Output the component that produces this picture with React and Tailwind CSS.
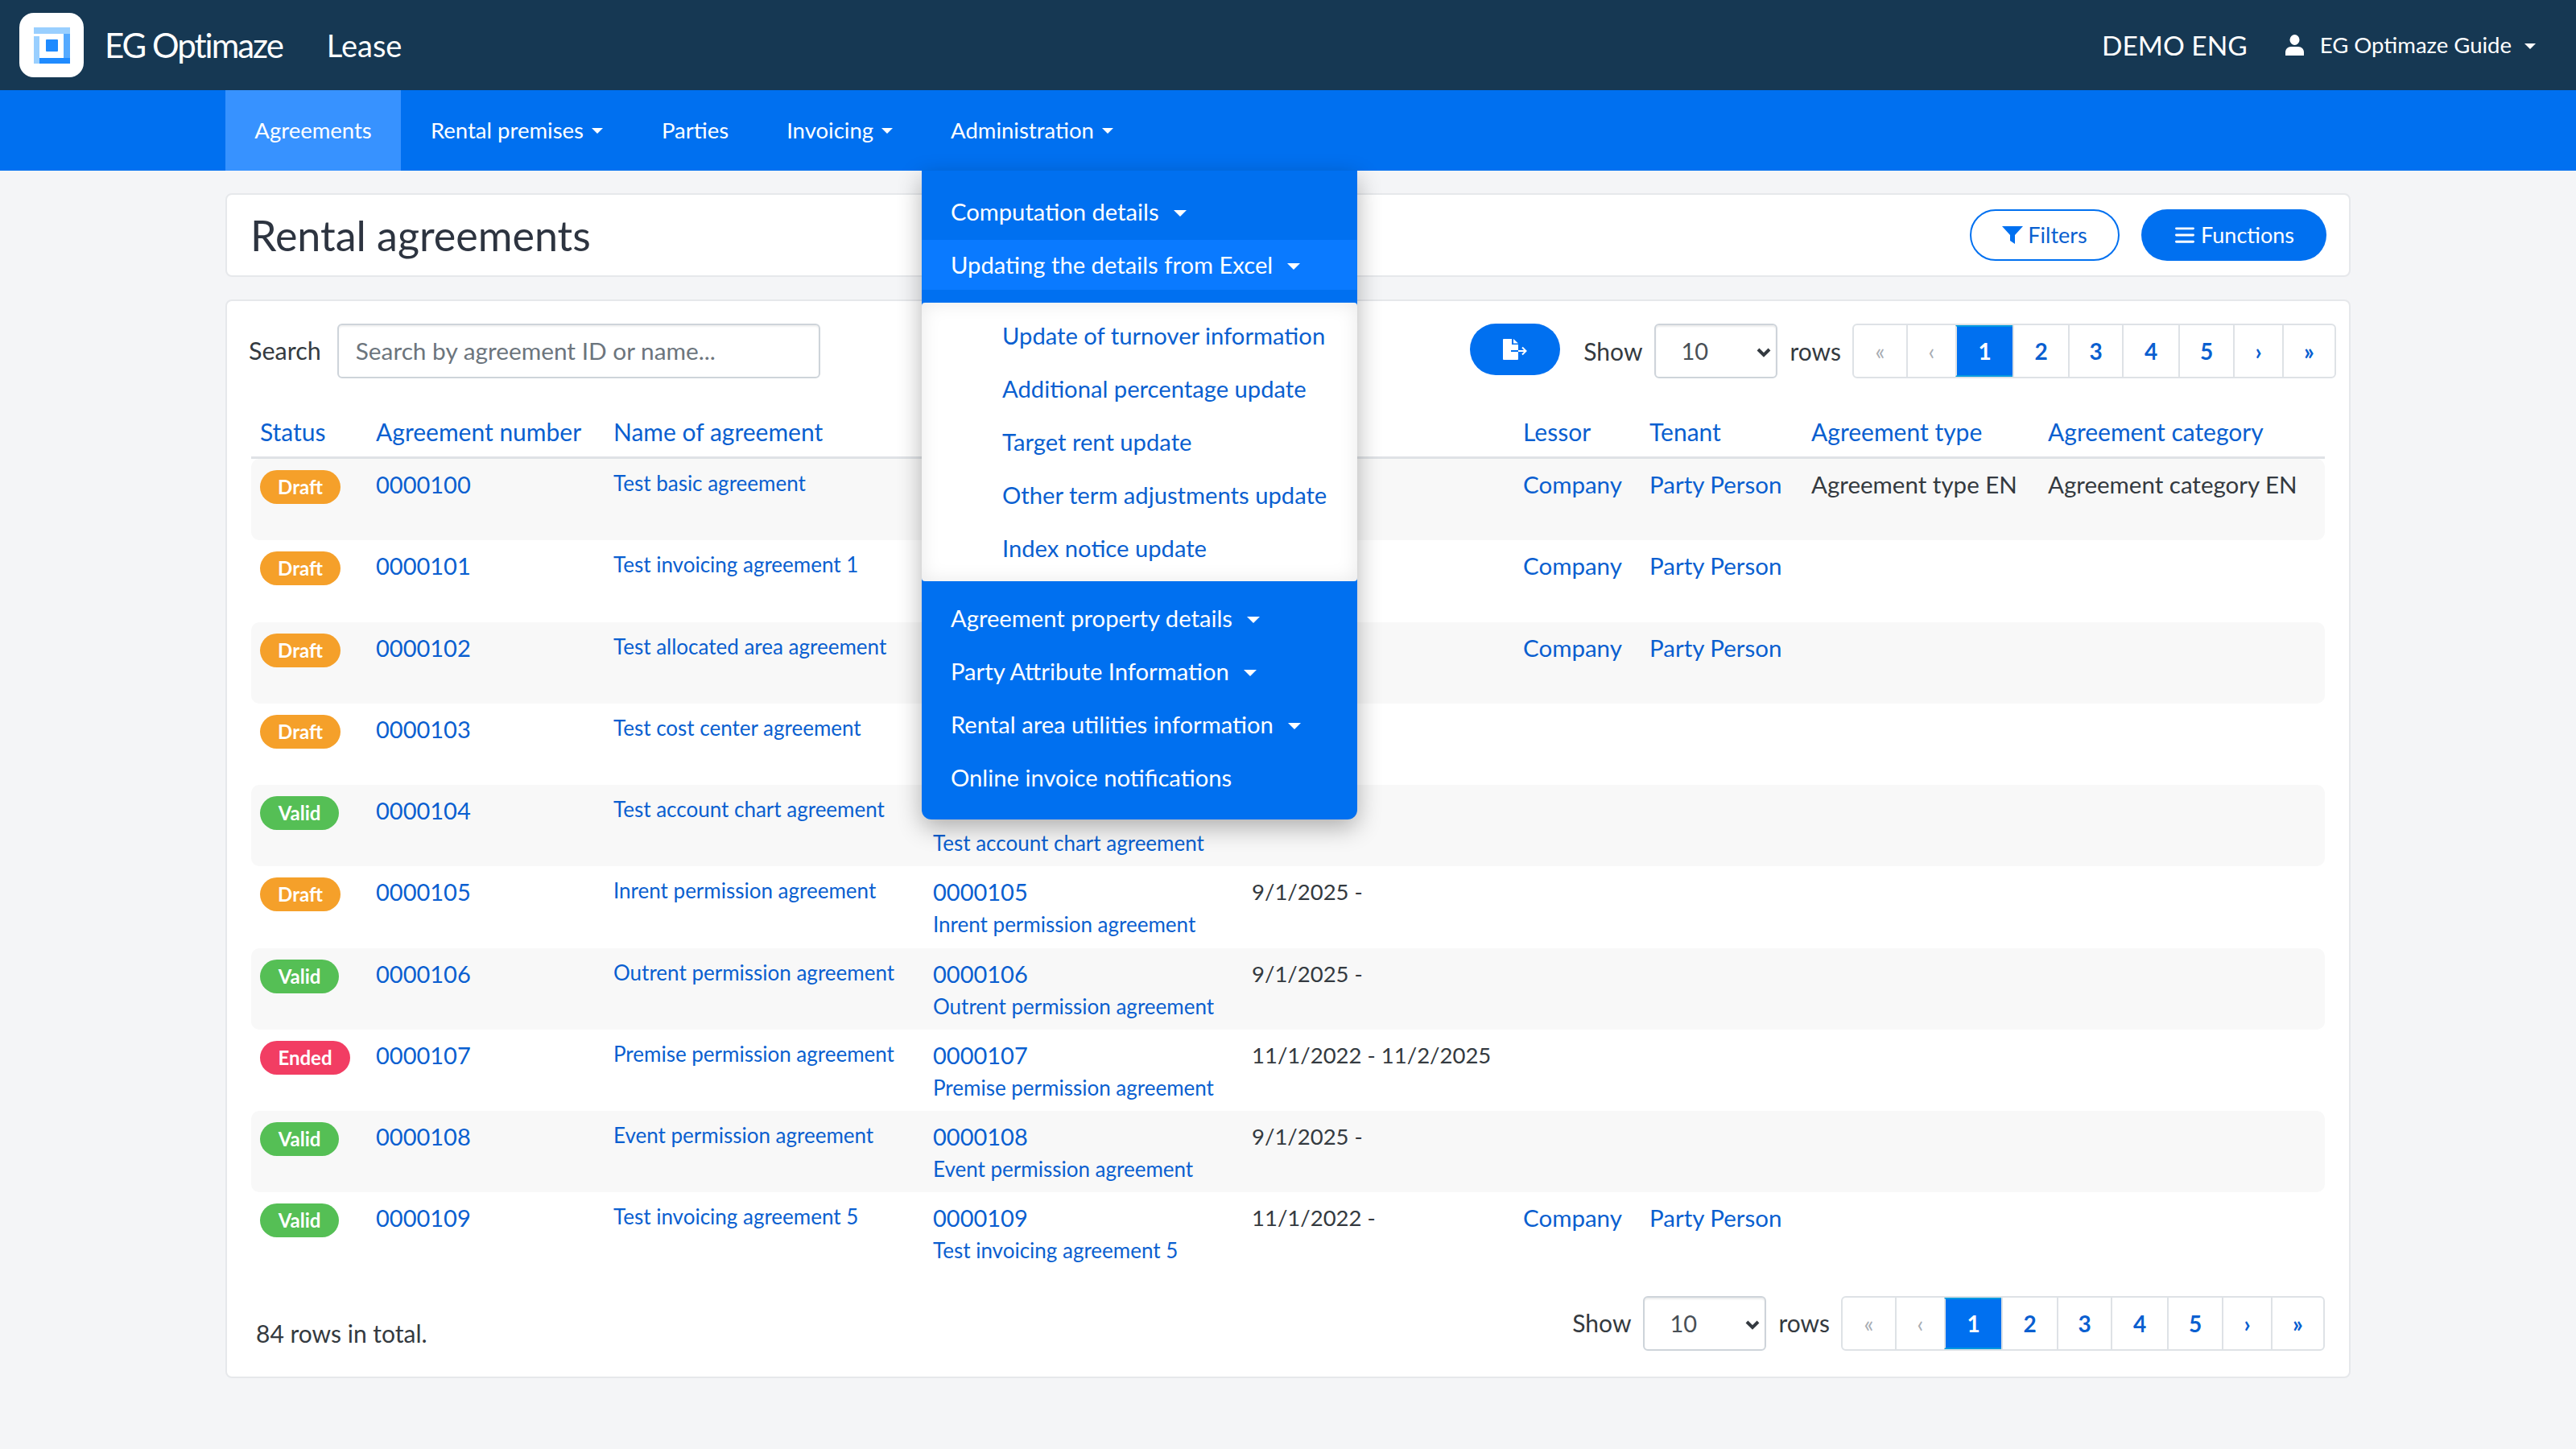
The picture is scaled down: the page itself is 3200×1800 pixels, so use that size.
import React from 'react';
import { AlignJustify } from 'lucide-react';

const rows = [
  { status: 'Draft', no: '0000100', name: 'Test basic agreement', date: '', lessor: true, tenant: true, type: 'Agreement type EN', cat: 'Agreement category EN' },
  { status: 'Draft', no: '0000101', name: 'Test invoicing agreement 1', date: '', lessor: true, tenant: true },
  { status: 'Draft', no: '0000102', name: 'Test allocated area agreement', date: '', lessor: true, tenant: true },
  { status: 'Draft', no: '0000103', name: 'Test cost center agreement', date: '' },
  { status: 'Valid', no: '0000104', name: 'Test account chart agreement', date: '' },
  { status: 'Draft', no: '0000105', name: 'Inrent permission agreement', date: '9/1/2025 -' },
  { status: 'Valid', no: '0000106', name: 'Outrent permission agreement', date: '9/1/2025 -' },
  { status: 'Ended', no: '0000107', name: 'Premise permission agreement', date: '11/1/2022 - 11/2/2025' },
  { status: 'Valid', no: '0000108', name: 'Event permission agreement', date: '9/1/2025 -' },
  { status: 'Valid', no: '0000109', name: 'Test invoicing agreement 5', date: '11/1/2022 -', lessor: true, tenant: true },
];

const badgeClass = {
  Draft: 'bg-[#f5a02a] w-[100px]',
  Valid: 'bg-[#55bf55] w-[98px]',
  Ended: 'bg-[#f23d63] w-[112px]',
};

const gridCols = 'grid grid-cols-[144px_295px_397px_396px_337px_157px_201px_294px_1fr]';

const Caret = ({ className = '' }) => (
  <span className={`inline-block border-x-[8px] border-t-[8px] border-x-transparent border-t-current ${className}`} />
);

const SmallCaret = () => (
  <span className="inline-block border-x-[7px] border-t-[7px] border-x-transparent border-t-current" />
);

const Logo = () => (
  <div className="flex h-[80px] w-[80px] items-center justify-center rounded-[18px] bg-white">
    <svg width="45" height="45" viewBox="0 0 45 45">
      <rect x="0" y="0" width="45" height="8" fill="#99cfff" />
      <rect x="0" y="11" width="7" height="34" fill="#99cfff" />
      <rect x="37" y="8" width="8" height="30" fill="#55aaff" />
      <rect x="7" y="38" width="38" height="7" fill="#1f8bff" />
      <rect x="15" y="15" width="15" height="15" rx="1" fill="#1f8bff" />
    </svg>
  </div>
);

const Pagination = () => {
  const cells = [
    { t: '«', w: 'w-[65px]', c: 'text-[#a8adb3]' },
    { t: '‹', w: 'w-[61px]', c: 'text-[#a8adb3]' },
    { t: '1', w: 'w-[71px]', c: 'border-y-2 border-y-[#0099e0] bg-[#0070f0] text-white font-bold' },
    { t: '2', w: 'w-[69px]', c: 'text-[#0a5fd0] font-bold' },
    { t: '3', w: 'w-[67px]', c: 'text-[#0a5fd0] font-bold' },
    { t: '4', w: 'w-[70px]', c: 'text-[#0a5fd0] font-bold' },
    { t: '5', w: 'w-[68px]', c: 'text-[#0a5fd0] font-bold' },
    { t: '›', w: 'w-[61px]', c: 'text-[#0a5fd0] font-bold' },
    { t: '»', w: 'w-[65px]', c: 'text-[#0a5fd0] font-bold' },
  ];
  return (
    <div className="flex h-[68px] overflow-hidden rounded-[6px] border-2 border-[#dee2e6]">
      {cells.map((c, i) => (
        <div key={i} className={`flex items-center justify-center border-l-2 border-l-[#dee2e6] first:border-l-0 text-[28px] ${c.w} ${c.c}`}>
          {c.t}
        </div>
      ))}
    </div>
  );
};

const RowsControl = () => (
  <div className="flex items-center text-[#343a40]">
    <span className="text-[30px]">Show</span>
    <div className="relative mx-[15px] flex h-[68px] w-[153px] items-center rounded-[6px] border-2 border-[#ced4da] pl-[31px] text-[29px] text-[#495057] shadow-[inset_0_2px_2px_rgba(0,0,0,0.08)]">
      10
      <svg className="absolute right-[6px] top-[27px]" width="18" height="14" viewBox="0 0 18 14">
        <path d="M2 3 L9 10 L16 3" fill="none" stroke="#343a40" strokeWidth="4" />
      </svg>
    </div>
    <span className="mr-[14px] text-[30px]">rows</span>
    <Pagination />
  </div>
);

const subItems = [
  'Update of turnover information',
  'Additional percentage update',
  'Target rent update',
  'Other term adjustments update',
  'Index notice update',
];

const AdminMenu = () => (
  <div className="absolute left-[1145px] top-[212px] z-10 w-[541px] overflow-hidden rounded-b-[12px] bg-[#0070f0] text-[29.2px] text-white shadow-[0_10px_30px_rgba(0,0,0,0.3)]">
    <div className="flex h-[86px] items-center gap-[18px] pl-[36px] pt-[16px]">
      Computation details <Caret className="mt-[4px]" />
    </div>
    <div className="flex h-[62px] items-center gap-[18px] bg-[#0a7aff] pl-[36px]">
      Updating the details from Excel <Caret className="mt-[4px]" />
    </div>
    <div className="mt-[16px] flex h-[346px] flex-col justify-center rounded-[4px] bg-white pb-[1px] pl-[100px] text-[#0a5fd0] shadow-[inset_0_0_24px_rgba(0,0,0,0.09)]">
      {subItems.map(item => (
        <div key={item} className="flex h-[66px] items-center">{item}</div>
      ))}
    </div>
    <div className="pb-[19px] pl-[36px] pt-[13px]">
      <div className="flex h-[66px] items-center gap-[18px]">Agreement property details <Caret className="mt-[4px]" /></div>
      <div className="flex h-[66px] items-center gap-[18px]">Party Attribute Information <Caret className="mt-[4px]" /></div>
      <div className="flex h-[66px] items-center gap-[18px]">Rental area utilities information <Caret className="mt-[4px]" /></div>
      <div className="flex h-[66px] items-center">Online invoice notifications</div>
    </div>
  </div>
);

export default function App() {
  return (
    <div className="relative min-h-[1800px] bg-[#f4f5f7] font-['Lato',sans-serif] text-[#343a40]">
      {/* top bar */}
      <header className="flex h-[112px] items-center justify-between bg-[#163853] pl-[24px] pr-[50px] text-white">
        <div className="flex items-center">
          <Logo />
          <span className="ml-[26px] text-[42px] tracking-[-2px]">EG Optimaze</span>
          <span className="ml-[55px] text-[38px]">Lease</span>
        </div>
        <div className="flex items-center">
          <span className="text-[33.5px]">DEMO ENG</span>
          <svg className="ml-[47px]" width="23" height="26" viewBox="0 0 23 26" fill="white">
            <ellipse cx="11.5" cy="6.5" rx="6" ry="6.5" />
            <path d="M0 26 V22 C0 18 3 15 7 15 H16 C20 15 23 18 23 22 V26 Z" />
          </svg>
          <span className="ml-[20px] text-[27.5px]">EG Optimaze Guide</span>
          <span className="ml-[16px] mt-[2px] inline-flex"><SmallCaret /></span>
        </div>
      </header>

      {/* nav */}
      <nav className="flex h-[100px] items-stretch bg-[#0070f0] pl-[280px] text-[27.5px] text-white">
        <div className="flex w-[218px] items-center justify-center bg-[#3792ff]">Agreements</div>
        <div className="flex items-center gap-[10px] pl-[37px] pr-[37px]">Rental premises <SmallCaret /></div>
        <div className="flex items-center pl-[36px] pr-[36px]">Parties</div>
        <div className="flex items-center gap-[10px] pl-[36px] pr-[36px]">Invoicing <SmallCaret /></div>
        <div className="flex items-center gap-[10px] pl-[36px]">Administration <SmallCaret /></div>
      </nav>

      <main className="px-[280px] pt-[28px]">
        {/* title card */}
        <section className="flex h-[104px] items-center justify-between rounded-[8px] border-2 border-[#e6e8eb] bg-white pl-[29px] pr-[28px]">
          <h1 className="text-[52px] font-normal text-[#2d3440]">Rental agreements</h1>
          <div className="flex items-center gap-[27px]">
            <button className="flex h-[64px] w-[186px] items-center justify-center gap-[6px] rounded-full border-2 border-[#0070f0] bg-white text-[27px] text-[#0a5fd0]">
              <svg width="26" height="22" viewBox="0 0 26 22" fill="#0070f0">
                <path d="M0 0 H26 L16 11 V22 L10 18 V11 Z" />
              </svg>
              Filters
            </button>
            <button className="flex h-[64px] w-[230px] items-center justify-center gap-[6px] rounded-full bg-[#0070f0] text-[27px] text-white">
              <AlignJustify className="h-[28px] w-[28px]" strokeWidth={2.5} />
              Functions
            </button>
          </div>
        </section>

        {/* list card */}
        <section className="mt-[28px] h-[1340px] rounded-[8px] border-2 border-[#e6e8eb] bg-white px-[30px] pt-[28px]">
          <div className="flex items-center justify-between">
            <div className="-ml-[3px] flex items-center">
              <span className="text-[30.5px]">Search</span>
              <div className="ml-[20px] flex h-[68px] w-[600px] items-center rounded-[6px] border-2 border-[#ced4da] pl-[21px] text-[29.8px] text-[#6c757d] shadow-[inset_0_2px_2px_rgba(0,0,0,0.06)]">
                Search by agreement ID or name...
              </div>
            </div>
            <div className="-mr-[14px] flex items-center">
              <button className="-mt-[4px] mr-[29px] flex h-[64px] w-[112px] items-center justify-center rounded-full bg-[#0070f0]">
                <svg width="30" height="26" viewBox="0 0 30 26" fill="white">
                  <path d="M1 0 H11 V7 H19 V25 C19 25.500 18.500 26 18 26 H1 C0.500 26 0 25.500 0 25 V1 C0 0.500 0.500 0 1 0 Z" />
                  <path d="M13 0 L19 5.500 H13 Z" />
                  <path d="M10 15 H19" stroke="#0070f0" strokeWidth="2" />
                  <path d="M19 15 H28 M24 10.500 L28.500 15 L24 19.500" fill="none" stroke="white" strokeWidth="2" />
                </svg>
              </button>
              <RowsControl />
            </div>
          </div>

          <div className="mt-[28px]">
            <div className={`${gridCols} h-[72px] items-center border-b-[3px] border-[#dfe2e6] pl-[11px] pt-[8px] text-[30px] text-[#0a5fd0]`}>
              <span>Status</span>
              <span>Agreement number</span>
              <span>Name of agreement</span>
              <span />
              <span />
              <span>Lessor</span>
              <span>Tenant</span>
              <span>Agreement type</span>
              <span>Agreement category</span>
            </div>
            {rows.map((r, i) => (
              <div key={r.no} className={`${gridCols} h-[101.25px] rounded-[10px] pl-[11px] pt-[14px] text-[29.5px] leading-[36px] ${i % 2 === 0 ? 'bg-[#f8f8f8]' : ''}`}>
                <span className={`flex h-[42px] items-center justify-center rounded-full text-[24px] font-bold text-white ${badgeClass[r.status]}`}>{r.status}</span>
                <span className="text-[29px] text-[#0a5fd0]">{r.no}</span>
                <span className="text-[26px] leading-[32px] text-[#0a5fd0]">{r.name}</span>
                <div className="text-[#0a5fd0]">
                  <div className="text-[29px]">{r.no}</div>
                  <div className="mt-[6px] text-[26px] leading-[32px]">{r.name}</div>
                </div>
                <span className="text-[27.5px]">{r.date}</span>
                <span className="text-[#0a5fd0]">{r.lessor ? 'Company' : ''}</span>
                <span className="text-[#0a5fd0]">{r.tenant ? 'Party Person' : ''}</span>
                <span>{r.type}</span>
                <span>{r.cat}</span>
              </div>
            ))}
          </div>

          <div className="mt-[27px] flex items-end justify-between">
            <span className="mb-[4px] pl-[6px] text-[30px] leading-[36px]">84 rows in total.</span>
            <RowsControl />
          </div>
        </section>
      </main>

      <AdminMenu />
    </div>
  );
}
